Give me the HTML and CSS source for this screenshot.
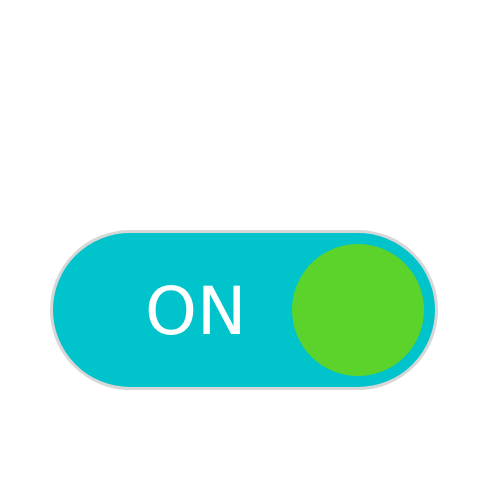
FILE: index.html
```html
<!DOCTYPE html>
<html>
<head>
<meta charset="utf-8">
<link rel="stylesheet" href="styles.css">
</head>
<body>
<div class="page">
  <div class="toggle">
    <span class="label">ON</span>
    <span class="knob"></span>
  </div>
</div>
</body>
</html>
```
FILE: styles.css
```css
html, body {
  margin: 0;
  padding: 0;
  background: #ffffff;
}
.page {
  width: 500px;
  height: 500px;
  box-sizing: border-box;
  padding-top: 230px;
  padding-left: 50px;
}
.toggle {
  box-sizing: border-box;
  width: 388px;
  height: 160px;
  border: 3px solid #d7d7d7;
  border-radius: 80px;
  background: #00c3cb;
  display: flex;
  align-items: center;
}
.label {
  font-family: "DejaVu Sans", sans-serif;
  font-size: 66px;
  line-height: 1;
  color: #ffffff;
  margin-left: 92px;
  padding-top: 3px;
}
.knob {
  width: 132px;
  height: 132px;
  border-radius: 50%;
  background: #5cd32a;
  margin-left: auto;
  margin-right: 11px;
}
```
